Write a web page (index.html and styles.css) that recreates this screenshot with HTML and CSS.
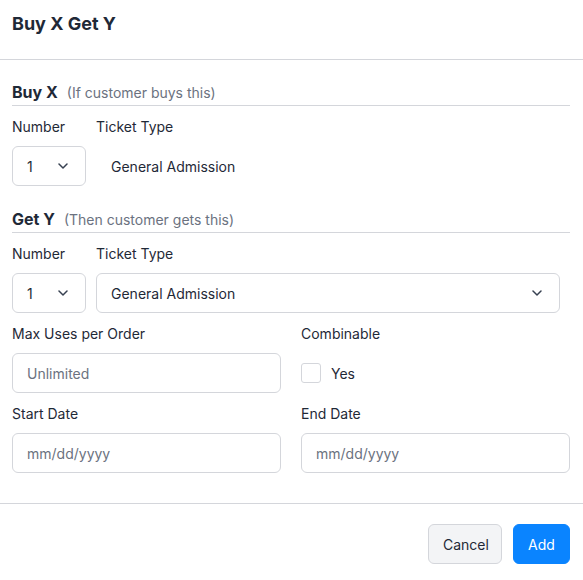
FILE: index.html
```html
<!DOCTYPE html>
<html lang="en">
<head>
<meta charset="utf-8">
<title>Buy X Get Y</title>
<link rel="stylesheet" href="styles.css">
</head>
<body>
<div class="modal">
  <div class="modal-header">
    <h1 class="modal-title">Buy X Get Y</h1>
  </div>
  <div class="modal-body">
    <div class="section-head">
      <span class="section-title">Buy X</span>
      <span class="section-sub">(If customer buys this)</span>
    </div>
    <div class="pair">
      <div class="field">
        <div class="label">Number</div>
        <div class="select small">
          <span>1</span>
          <svg class="chev" width="10" height="6" viewBox="0 0 10 6"><path d="M1 1l4 4 4-4" fill="none" stroke="#374151" stroke-width="1.5" stroke-linecap="round" stroke-linejoin="round"/></svg>
        </div>
      </div>
      <div class="field">
        <div class="label">Ticket Type</div>
        <div class="static">General Admission</div>
      </div>
    </div>

    <div class="section-head second">
      <span class="section-title">Get Y</span>
      <span class="section-sub">(Then customer gets this)</span>
    </div>
    <div class="pair">
      <div class="field">
        <div class="label">Number</div>
        <div class="select small">
          <span>1</span>
          <svg class="chev" width="10" height="6" viewBox="0 0 10 6"><path d="M1 1l4 4 4-4" fill="none" stroke="#374151" stroke-width="1.5" stroke-linecap="round" stroke-linejoin="round"/></svg>
        </div>
      </div>
      <div class="field grow">
        <div class="label">Ticket Type</div>
        <div class="select wide">
          <span>General Admission</span>
          <svg class="chev" width="10" height="6" viewBox="0 0 10 6"><path d="M1 1l4 4 4-4" fill="none" stroke="#374151" stroke-width="1.5" stroke-linecap="round" stroke-linejoin="round"/></svg>
        </div>
      </div>
    </div>

    <div class="grid">
      <div class="field">
        <div class="label">Max Uses per Order</div>
        <input class="input" type="text" placeholder="Unlimited">
      </div>
      <div class="field">
        <div class="label">Combinable</div>
        <label class="check-row"><span class="checkbox"></span><span>Yes</span></label>
      </div>
      <div class="field">
        <div class="label">Start Date</div>
        <input class="input" type="text" placeholder="mm/dd/yyyy">
      </div>
      <div class="field">
        <div class="label">End Date</div>
        <input class="input" type="text" placeholder="mm/dd/yyyy">
      </div>
    </div>
  </div>
  <div class="modal-footer">
    <button class="btn btn-cancel">Cancel</button>
    <button class="btn btn-add">Add</button>
  </div>
</div>
</body>
</html>
```
FILE: styles.css
```css
* { box-sizing: border-box; }
html, body { margin: 0; padding: 0; background: #fff; }
body {
  font-family: Inter, "Noto Sans", "Liberation Sans", sans-serif;
  font-size: 14px;
  color: #1f2937;
}
.modal { width: 583px; }
.modal-header {
  height: 60px;
  border-bottom: 1px solid #d4d6db;
  padding: 13px 12px 0;
}
.modal-title {
  margin: 0;
  font-size: 18px;
  line-height: 22px;
  font-weight: 700;
  color: #1f2937;
}
.modal-body {
  padding: 20px 13px 0 12px;
}
.section-head {
  height: 26px;
  border-bottom: 1px solid #d4d6db;
  display: flex;
  align-items: baseline;
  gap: 9px;
  line-height: 24px;
}
.section-head.second { margin-top: 21px; }
.section-title {
  font-size: 16px;
  font-weight: 700;
  color: #1f2937;
}
.section-sub {
  font-size: 14px;
  color: #6b7280;
}
.pair {
  display: flex;
  gap: 10px;
  margin-top: 11px;
}
.field { display: flex; flex-direction: column; gap: 9px; }
.field.grow { flex: 0 0 464px; }
.label { line-height: 20px; font-size: 14px; color: #1f2937; }
.select {
  height: 40px;
  border: 1px solid #d4d6db;
  border-radius: 6px;
  display: flex;
  align-items: center;
  justify-content: space-between;
  padding: 0 17px 0 14px;
  color: #1f2937;
}
.select.small { width: 74px; }
.select.wide { width: 464px; }
.chev { display: block; }
.static {
  height: 40px;
  display: flex;
  align-items: center;
  padding-left: 15px;
}
.grid {
  display: grid;
  grid-template-columns: 269px 269px;
  column-gap: 20px;
  row-gap: 11px;
  margin-top: 11px;
}
.input {
  height: 40px;
  width: 100%;
  border: 1px solid #d4d6db;
  border-radius: 6px;
  padding: 0 14px;
  font: inherit;
  color: #1f2937;
  outline: none;
}
.input::placeholder { color: #6b7280; }
.check-row {
  height: 40px;
  display: flex;
  align-items: center;
  gap: 10px;
}
.checkbox {
  width: 20px;
  height: 20px;
  border: 1px solid #d4d6db;
  border-radius: 3px;
  background: #fff;
}
.modal-footer {
  margin-top: 30px;
  border-top: 1px solid #d4d6db;
  padding: 20px 13px 0 12px;
  display: flex;
  justify-content: flex-end;
  gap: 11px;
}
.btn {
  height: 40px;
  border-radius: 6px;
  font: inherit;
  font-size: 14px;
  padding: 0 14px;
  cursor: pointer;
}
.btn-cancel {
  background: #f3f4f6;
  border: 1px solid #d4d6db;
  color: #1f2937;
  width: 74px;
}
.btn-add {
  background: #0a84ff;
  border: 1px solid #0a84ff;
  color: #fff;
  width: 57px;
}
```
